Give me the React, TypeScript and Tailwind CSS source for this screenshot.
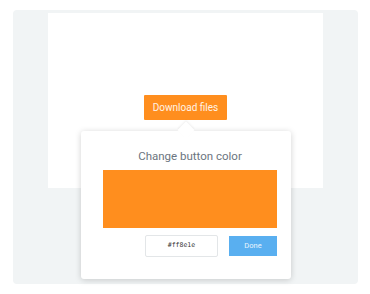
export default function App() {
  return (
    <div className="w-[370px] h-[294px] bg-white pt-[10px] pl-[13px] font-['Roboto',sans-serif]">
      <div className="relative w-[345px] h-[274px] rounded-[4px] bg-[#f1f4f5]">
        {/* canvas area */}
        <div className="ml-[35px] pt-[3px]">
          <div className="w-[275px] h-[175px] bg-white flex justify-center pt-[82px]">
            <button className="h-[25px] w-[83px] rounded-[1px] bg-[#ff8e1e] text-[#fff3e6] text-[10px] leading-none">
              Download files
            </button>
          </div>
        </div>

        {/* color popover */}
        <div className="absolute left-[68px] top-[121px] w-[210px] h-[148px] rounded-[3px] bg-white shadow-[0_1px_6px_rgba(0,0,0,0.18)]">
          <div className="absolute -top-[7px] left-[99px] w-[12px] h-[12px] rotate-45 bg-white shadow-[-1px_-1px_2px_rgba(0,0,0,0.06)]" />
          <div className="relative pt-[17px] pl-[22px] pr-[14px]">
            <div className="text-center text-[11.5px] leading-[16px] text-[#6b7580]">Change button color</div>
            <div className="mt-[6px] h-[58px] bg-[#ff8e1e]" />
            <div className="mt-[7px] flex justify-end items-center gap-[11px]">
              <div className="w-[73px] h-[22px] rounded-[2px] border border-[#e3e6e8] flex items-center justify-center text-[6.5px] text-[#333] font-['DejaVu_Sans_Mono',monospace]">
                #ff8e1e
              </div>
              <button className="w-[48px] h-[20px] bg-[#59aff0] text-[#eaf5fd] text-[7.5px] leading-none">Done</button>
            </div>
          </div>
        </div>
      </div>
    </div>
  );
}
